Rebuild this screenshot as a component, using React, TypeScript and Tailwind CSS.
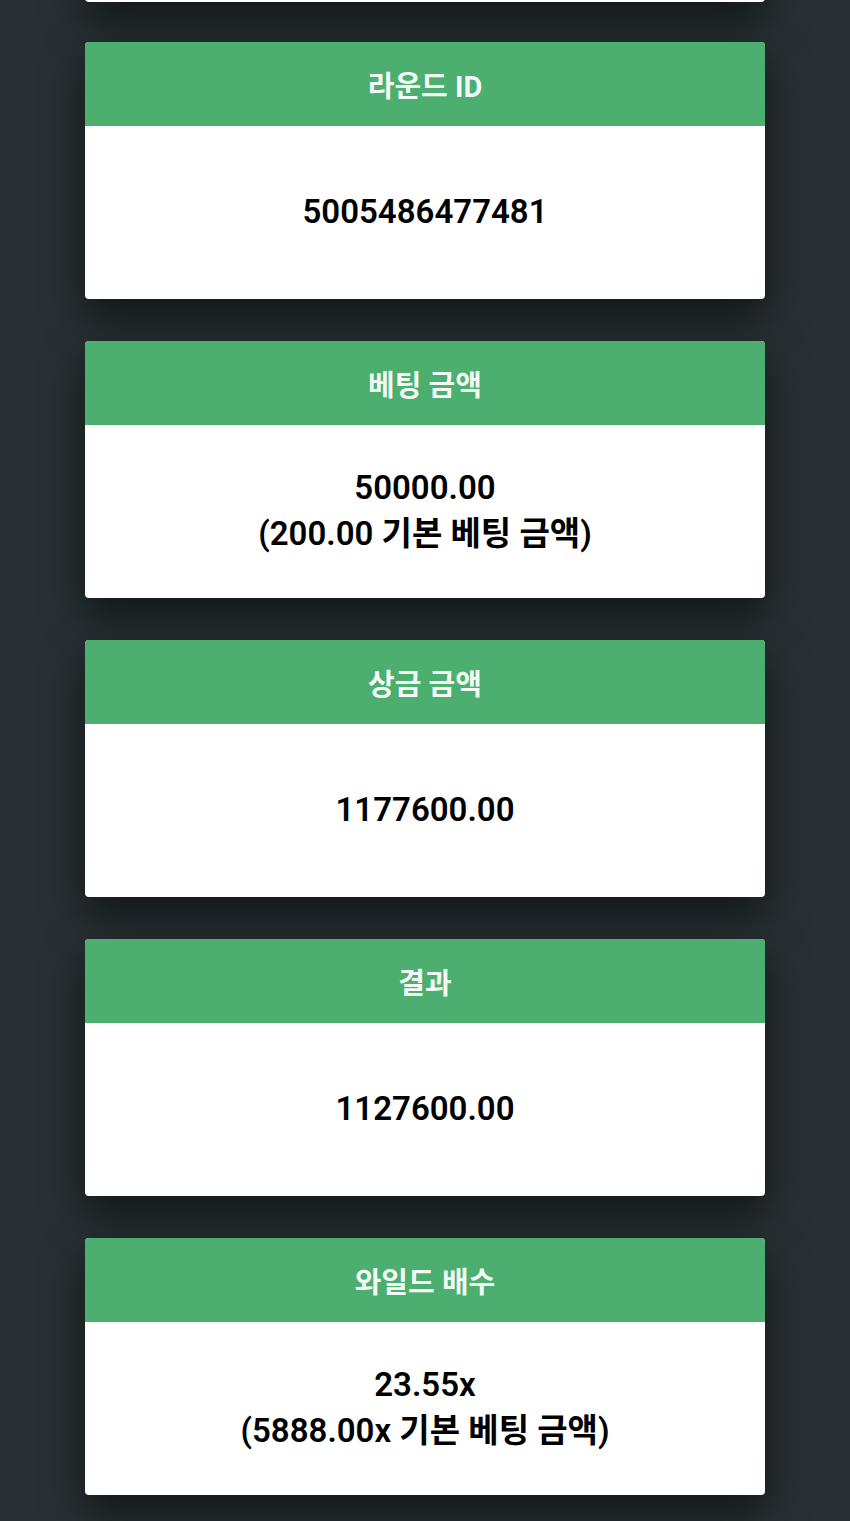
const results = [
  { title: "라운드 ID", lines: ["5005486477481"] },
  { title: "베팅 금액", lines: ["50000.00", "(200.00 기본 베팅 금액)"] },
  { title: "상금 금액", lines: ["1177600.00"] },
  { title: "결과", lines: ["1127600.00"] },
  { title: "와일드 배수", lines: ["23.55x", "(5888.00x 기본 베팅 금액)"] },
]

function ResultCard({ title, lines }: (typeof results)[number]) {
  return (
    <section className="overflow-hidden rounded-sm bg-white text-center shadow-[0_18px_42px_rgba(0,0,0,0.54)]">
      <h2 className="bg-[#4caf70] pt-[23px] pb-[17px] text-[29px] leading-[44px] font-bold text-white/95">
        {title}
      </h2>
      <div className="flex min-h-[173px] flex-col items-center justify-center pb-[2px] text-[33px] leading-[46px] font-semibold text-black">
        {lines.map((line) => (
          <p key={line}>{line}</p>
        ))}
      </div>
    </section>
  )
}

export default function App() {
  return (
    <main className="min-h-screen overflow-hidden bg-[#273033] px-[10%] pb-[26px] font-[Roboto,'Noto_Sans_CJK_KR',sans-serif]">
      {/* Bottom edge of the card scrolled off above */}
      <div className="-mt-[94px] h-24 rounded-sm bg-white shadow-[0_18px_42px_rgba(0,0,0,0.54)]" />
      <div className="mt-10 flex flex-col gap-[42px]">
        {results.map((result) => (
          <ResultCard key={result.title} {...result} />
        ))}
      </div>
    </main>
  )
}
